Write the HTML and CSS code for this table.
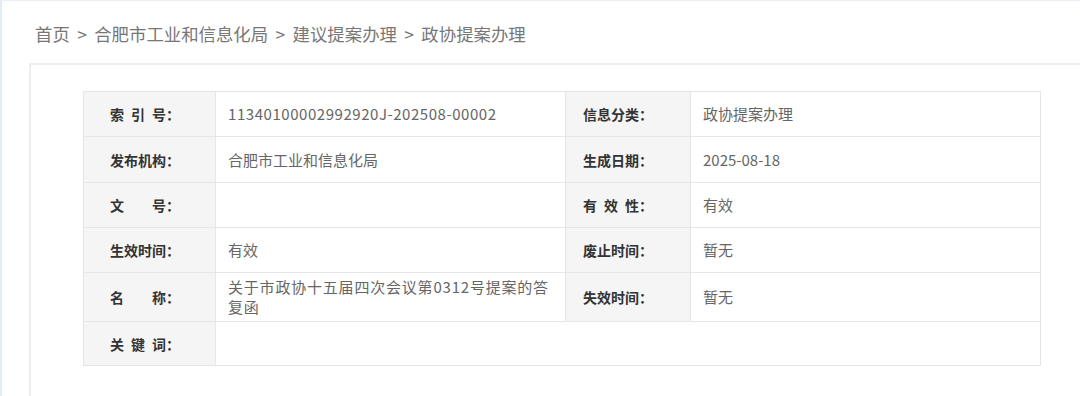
FILE: index.html
```html
<!DOCTYPE html>
<html lang="zh-CN">
<head>
<meta charset="utf-8">
<title>政协提案办理</title>
<link rel="stylesheet" href="styles.css">
</head>
<body>
<div class="page">
  <div class="crumb">首页 &gt; 合肥市工业和信息化局 &gt; 建议提案办理 &gt; 政协提案办理</div>
  <div class="box">
    <table class="info">
      <colgroup>
        <col class="c-l1"><col class="c-v1"><col class="c-l2"><col class="c-v2">
      </colgroup>
      <tr class="r1">
        <th><span class="j">索引号</span>：</th>
        <td class="num">11340100002992920J-202508-00002</td>
        <th class="th2">信息分类：</th>
        <td>政协提案办理</td>
      </tr>
      <tr class="r2">
        <th>发布机构：</th>
        <td>合肥市工业和信息化局</td>
        <th class="th2">生成日期：</th>
        <td>2025-08-18</td>
      </tr>
      <tr class="r3">
        <th><span class="j">文号</span>：</th>
        <td></td>
        <th class="th2"><span class="j">有效性</span>：</th>
        <td>有效</td>
      </tr>
      <tr class="r4">
        <th>生效时间：</th>
        <td>有效</td>
        <th class="th2">废止时间：</th>
        <td>暂无</td>
      </tr>
      <tr class="r5">
        <th><span class="j">名称</span>：</th>
        <td class="multi">关于市政协十五届四次会议第0312号提案的答复函</td>
        <th class="th2">失效时间：</th>
        <td>暂无</td>
      </tr>
      <tr class="r6">
        <th><span class="j">关键词</span>：</th>
        <td colspan="3"></td>
      </tr>
    </table>
  </div>
</div>
</body>
</html>
```

FILE: styles.css
```css
html, body {
  margin: 0;
  padding: 0;
  background: #ffffff;
}
body {
  font-family: "Microsoft YaHei", "Noto Sans CJK SC", "Noto Sans", sans-serif;
}
.page {
  height: 396px;
  border-left: 2px solid #e2ebf6;
  border-top: 1px solid #e8eef7;
  box-sizing: border-box;
  padding-left: 27px;
  overflow: hidden;
}
.crumb {
  margin: 21px 0 0 6px;
  height: 24px;
  line-height: 24px;
  font-size: 17.4px;
  word-spacing: 3.5px;
  color: #777777;
  white-space: nowrap;
}
.box {
  margin-top: 17px;
  border-top: 2px solid #eeeeee;
  border-left: 2px solid #eeeeee;
  padding: 26px 0 40px 52px;
  width: 1200px;
}
.info {
  border-collapse: collapse;
  table-layout: fixed;
  width: 958px;
}
.c-l1 { width: 132px; }
.c-v1 { width: 350px; }
.c-l2 { width: 125px; }
.c-v2 { width: 350px; }
.info th, .info td {
  border: 1px solid #e6e6e6;
  padding: 0;
  vertical-align: middle;
}
.info th {
  background: #f5f5f5;
  color: #333333;
  font-weight: bold;
  font-size: 14px;
  text-align: right;
  padding-right: 35px;
  white-space: nowrap;
}
.info th.th2 {
  padding-right: 37px;
}
.info td {
  color: #666666;
  font-size: 15px;
  padding-left: 12px;
  padding-right: 6px;
  line-height: 20px;
}
.info td.num {
  letter-spacing: 0.55px;
}
.info td.multi {
  letter-spacing: 0.8px;
  padding-right: 8px;
}
.j {
  display: inline-block;
  width: 56px;
  text-align: justify;
  text-align-last: justify;
}
.r1 { height: 45px; }
.r2 { height: 46px; }
.r3 { height: 45px; }
.r4 { height: 45px; }
.r5 { height: 49px; }
.r6 { height: 44px; }
```
